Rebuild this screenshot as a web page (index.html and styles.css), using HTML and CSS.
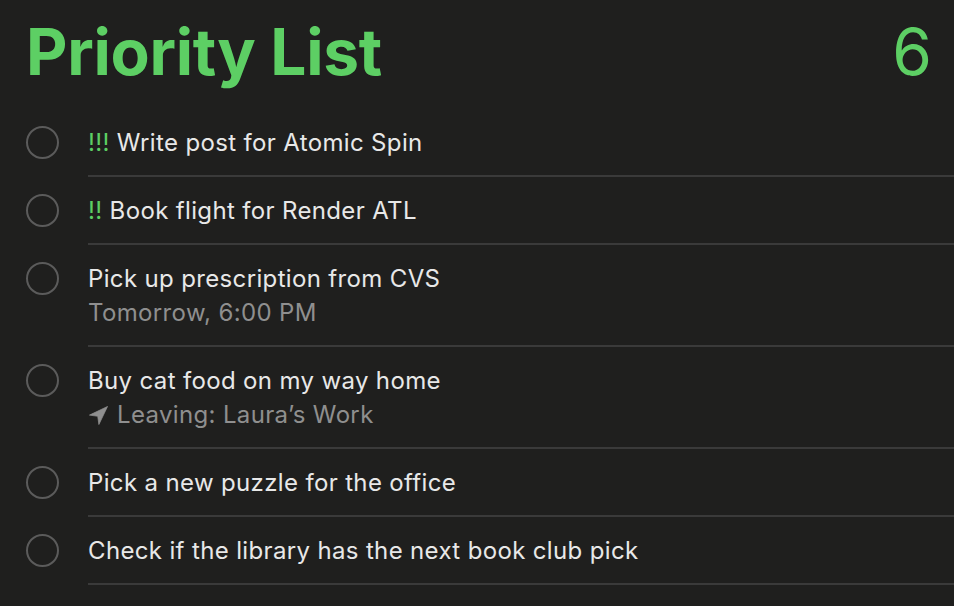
FILE: index.html
```html
<!DOCTYPE html>
<html lang="en">
<head>
  <meta charset="UTF-8" />
  <title>Priority List</title>
  <meta name="viewport" content="width=device-width, initial-scale=1" />
  <link rel="stylesheet" href="styles.css">
</head>
<body>

  <div class="list">
    <header class="list-header">
      <h1>Priority List</h1>
      <span class="count">6</span>
    </header>

    <ul class="items">
      <li class="item">
        <span class="check"></span>
        <div class="content">
          <div class="title"><span class="bang">!!!</span> Write post for Atomic Spin</div>
        </div>
      </li>
      <li class="item">
        <span class="check"></span>
        <div class="content">
          <div class="title"><span class="bang">!!</span> Book flight for Render ATL</div>
        </div>
      </li>
      <li class="item">
        <span class="check"></span>
        <div class="content">
          <div class="title">Pick up prescription from CVS</div>
          <div class="meta">Tomorrow, 6:00 PM</div>
        </div>
      </li>
      <li class="item">
        <span class="check"></span>
        <div class="content">
          <div class="title">Buy cat food on my way home</div>
          <div class="meta">
            <svg class="arrow" viewBox="0 0 20 20" width="19" height="19"><path d="M19.5 0.5 L0.5 9.6 L9.2 10.8 L10.4 19.5 Z" fill="currentColor" stroke="currentColor" stroke-width="0.8" stroke-linejoin="round"/></svg>
            Leaving: Laura’s Work
          </div>
        </div>
      </li>
      <li class="item">
        <span class="check"></span>
        <div class="content">
          <div class="title">Pick a new puzzle for the office</div>
        </div>
      </li>
      <li class="item">
        <span class="check"></span>
        <div class="content">
          <div class="title">Check if the library has the next book club pick</div>
        </div>
      </li>
    </ul>
  </div>

</body>
</html>
```

FILE: styles.css
```css
* {
  box-sizing: border-box;
}
body {
  margin: 0;
  background: #1f1f1e;
  font-family: Inter, 'Noto Sans', sans-serif;
  color: #e8e8e8;
}
.list {
  padding-top: 11px;
}
.list-header {
  display: flex;
  justify-content: space-between;
  align-items: baseline;
  padding: 0 22px 0 26px;
  height: 98px;
  color: #5dcf64;
}
.list-header h1 {
  margin: 0;
  font-size: 64px;
  font-weight: 700;
  line-height: 82px;
  letter-spacing: -0.3px;
}
.count {
  font-size: 64px;
  line-height: 82px;
  font-weight: 400;
}
.items {
  list-style: none;
  margin: 0;
  padding: 0;
}
.item {
  display: flex;
  align-items: flex-start;
}
.check {
  flex: none;
  width: 33px;
  height: 33px;
  margin: 17px 29px 0 26px;
  border: 2px solid #5b5b5b;
  border-radius: 50%;
}
.content {
  flex: 1;
  padding: 17px 0 15px;
  border-bottom: 2px solid #3a3a3a;
}
.title {
  font-size: 24px;
  line-height: 34px;
  letter-spacing: 0.35px;
}
.bang {
  color: #5dcf64;
}
.meta {
  display: flex;
  align-items: center;
  gap: 9px;
  font-size: 24px;
  line-height: 34px;
  letter-spacing: 0.35px;
  color: #8f8f8f;
}
.arrow {
  color: #8f8f8f;
  margin-left: 1px;
}
```
